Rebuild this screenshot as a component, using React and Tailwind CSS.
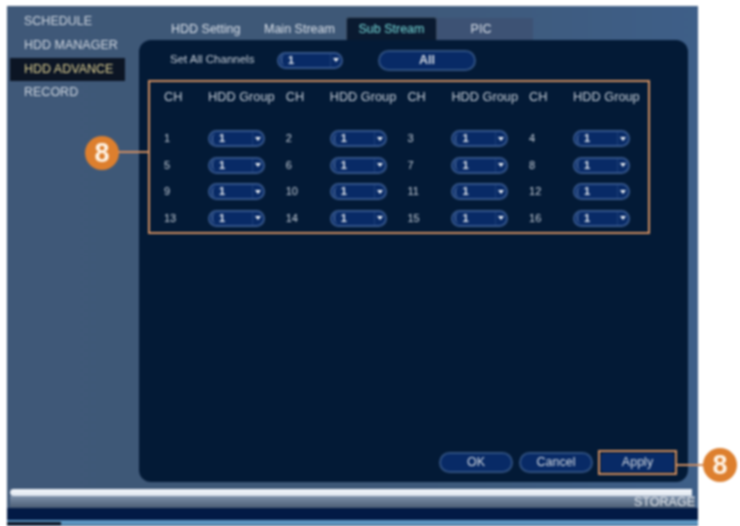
import React from "react";

const FONT = "font-['Liberation_Sans',Arial,sans-serif]";

const Select = ({ className = "w-[57px]" }) => (
  <div className={`${className} h-[17px] shrink-0 rounded-full border-2 border-[#34558a] bg-[#082a66] flex items-center text-[11px] font-bold text-[#e2e7ee]`}>
    <span className="ml-[2px] w-[4px] h-[10px] rounded-l-full border-l border-[#5f7ca6]" />
    <span className="ml-[3px] flex-1">1</span>
    <span className="h-full w-[11px] border-l border-[#1e4078] flex items-center justify-center">
      <span className="w-0 h-0 border-x-[3px] border-x-transparent border-t-[4px] border-t-[#f0f3f7]" />
    </span>
  </div>
);

const PillButton = ({ children, className }) => (
  <div className={`${className} h-[21px] rounded-full border-2 border-[#2f5080] bg-[#082a66] flex items-center justify-center text-[12.5px] text-[#d5dbe3]`}>
    {children}
  </div>
);

const Badge = ({ className }) => (
  <div className={`${className} absolute w-[34px] h-[34px] rounded-full bg-[#dd7f2e] flex items-center justify-center text-[27px] font-bold text-[#fff4e6]`}>
    8
  </div>
);

const App = () => {
  const rows = [
    [1, 2, 3, 4],
    [5, 6, 7, 8],
    [9, 10, 11, 12],
    [13, 14, 15, 16],
  ];

  return (
    <div className={`${FONT} relative w-[740px] h-[526px] overflow-hidden bg-white pl-[7px] pt-[6px] blur-[0.8px]`}>
      <div className="w-[691px] h-[520px] flex flex-col bg-gradient-to-r from-[#3f5878] via-[#3e5877] to-[#3e5f88]">
        <div className="flex h-[476px]">
          {/* left menu */}
          <div className="w-[132px] shrink-0 pl-[3px] pt-[4px] text-[12.5px] text-[#d0d7e0]">
            <div className="h-[23px] pl-[14px] flex items-center">SCHEDULE</div>
            <div className="h-[25px] pl-[14px] flex items-center">HDD MANAGER</div>
            <div className="h-[23px] w-[115px] pl-[14px] flex items-center bg-[#0c1524] text-[#e0d294]">HDD ADVANCE</div>
            <div className="h-[23px] pl-[14px] flex items-center">RECORD</div>
          </div>

          <div className="w-[549px] shrink-0 flex flex-col">
            {/* tabs */}
            <div className="h-[34px] flex items-end text-[12.5px] text-[#dae0e8]">
              <div className="w-[125px] h-[22px] pl-[32px] flex items-center">HDD Setting</div>
              <div className="w-[82px] h-[22px] flex items-center">Main Stream</div>
              <div className="w-[91px] h-[23px] rounded-t-[3px] border-x border-t border-[#3c4c60] bg-[#0a1a30] flex items-center justify-center text-[#78dcdb]">Sub Stream</div>
              <div className="w-[96px] h-[22px] bg-[#3d5274] flex items-center justify-center pr-[8px]">PIC</div>
            </div>

            {/* main panel */}
            <div className="h-[442px] rounded-[12px] bg-[#031a36] pl-[9px] flex flex-col text-[#c8d0da]">
              <div className="h-[40px] flex items-center">
                <span className="ml-[22px] w-[107px] text-[11.5px]">Set All Channels</span>
                <Select className="w-[66px]" />
                <PillButton className="ml-[35px] w-[98px] font-bold">All</PillButton>
              </div>

              <div className="w-[502px] h-[154px] border-2 border-[#d08e60] pl-[14px] text-[11.5px]">
                <div className="grid grid-cols-[repeat(4,121.7px)] h-[30px] items-center text-[12.75px]">
                  {[0, 1, 2, 3].map((i) => (
                    <div key={i} className="flex">
                      <span className="w-[44px]">CH</span>
                      <span>HDD Group</span>
                    </div>
                  ))}
                </div>
                <div className="pt-[18px] flex flex-col gap-[9.5px]">
                  {rows.map((row) => (
                    <div key={row[0]} className="grid grid-cols-[repeat(4,121.7px)] h-[17px] items-center">
                      {row.map((ch) => (
                        <div key={ch} className="flex items-center">
                          <span className="w-[44px] text-[11px]">{ch}</span>
                          <Select />
                        </div>
                      ))}
                    </div>
                  ))}
                </div>
              </div>

              <div className="mt-auto mb-[7px] h-[25px] flex items-center justify-end gap-[6px] pr-[11px]">
                <PillButton className="w-[74px]">OK</PillButton>
                <PillButton className="w-[74px]">Cancel</PillButton>
                <div className="w-[79px] h-[25px] ml-[-1px] border-2 border-[#d08e60] p-[1px]">
                  <div className="h-full rounded-[3px] bg-[#082a66] flex items-center justify-center text-[12.5px] text-[#d5dbe3]">Apply</div>
                </div>
              </div>
            </div>
          </div>
        </div>

        {/* storage bar */}
        <div className="mt-[7px] ml-[3px] w-[682px] h-[7px] rounded-l-full bg-gradient-to-b from-[#f4f7fb] to-[#dfe6ef]" />
        <div className="ml-[3px] w-[685px] h-[12px] bg-gradient-to-b from-[#7f92ab] to-[#4a5c73] text-right text-[12.5px] leading-[12px] text-[#e6eaef]">
          STORAGE
        </div>
        <div className="h-[12px] bg-[#021a45]" />
        <div className="flex h-[5px] bg-[#5b94bf]">
          <div className="w-[54px] mt-[2px] bg-[#0c1524]" />
        </div>
      </div>

      {/* callouts */}
      <Badge className="left-[85px] top-[136px]" />
      <div className="absolute left-[118px] top-[151px] w-[30px] h-[2px] bg-[#d08e60]" />
      <div className="absolute left-[677px] top-[464px] w-[28px] h-[2px] bg-[#d08e60]" />
      <Badge className="left-[703px] top-[448px]" />
    </div>
  );
};

export default App;
